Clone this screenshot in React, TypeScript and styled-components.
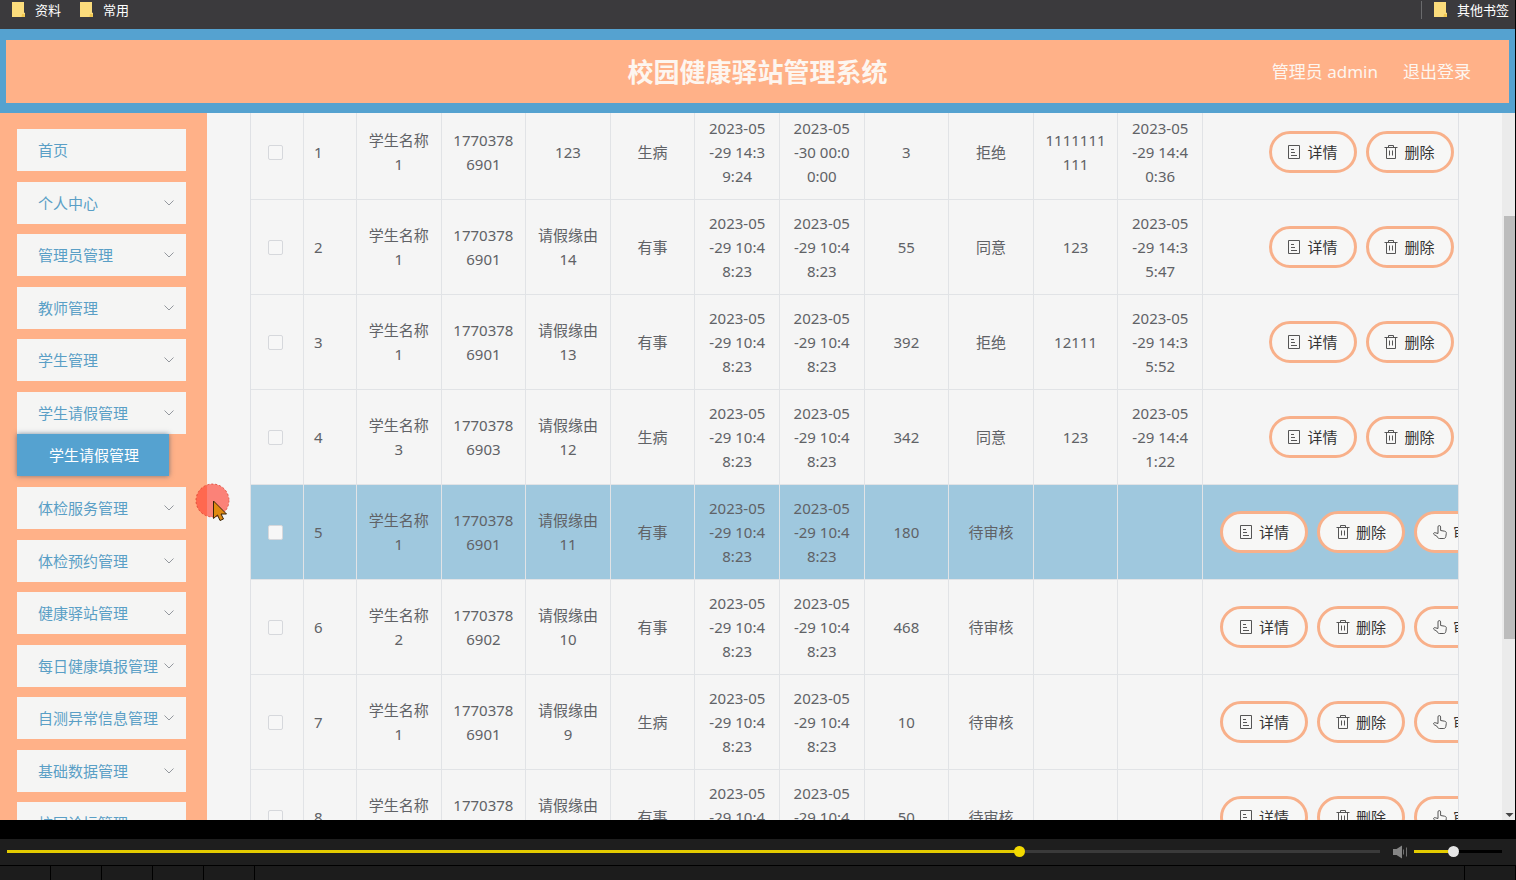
import React, { useState } from "react";
import styled, { createGlobalStyle } from "styled-components";

const GlobalStyle = createGlobalStyle`
  *, *::before, *::after { box-sizing: border-box; }
  body {
    margin: 0;
    background: #000;
    font-family: "Noto Sans", "Noto Sans CJK SC", sans-serif;
    font-size: 15px;
    line-height: 24px;
    color: #606266;
  }
  button { font: inherit; cursor: pointer; }
`;

const Player = styled.div`
  position: relative;
  display: flex;
  flex-direction: column;
  height: 100vh;
  overflow: hidden;
`;

const Screen = styled.div`
  flex: 1;
  min-height: 0;
  display: flex;
  flex-direction: column;
  border-right: 1px solid #000;
`;

/* Bookmarks bar */

const BookmarksBar = styled.nav`
  display: flex;
  align-items: center;
  gap: 19px;
  height: 29px;
  padding: 0 6px 10px 12px;
  background: #3b3a3d;
  flex-shrink: 0;
`;

const Bookmark = styled.a<{ $last?: boolean }>`
  display: flex;
  align-items: center;
  gap: 10px;
  margin-left: ${(p) => (p.$last ? "auto" : "0")};
  padding-left: ${(p) => (p.$last ? "12px" : "0")};
  border-left: ${(p) => (p.$last ? "1px solid #6a6a6c" : "0")};
  color: #fff;
  font-size: 13px;
  line-height: 18px;
  text-decoration: none;
`;

/* Site header */

const Header = styled.header`
  flex-shrink: 0;
  display: grid;
  grid-template-columns: 1fr auto 1fr;
  align-items: center;
  height: 84px;
  padding: 0 38px;
  background: #ffb188;
  border: solid #55a2d0;
  border-width: 11px 6px 10px;
  color: #fdf6f0;
`;

const Title = styled.h1`
  grid-column: 2;
  margin: 0;
  font-size: 26px;
  line-height: 36px;
  font-weight: 700;
`;

const Account = styled.div`
  display: flex;
  justify-content: flex-end;
  gap: 25px;
  font-size: 17px;
`;

const LogoutLink = styled.a`
  color: inherit;
  text-decoration: none;
`;

const Body = styled.div`
  flex: 1;
  min-height: 0;
  display: flex;
  overflow: hidden;
`;

/* Sidebar */

const Sidebar = styled.nav`
  flex: 0 0 207px;
  padding: 16px 21px 0 17px;
  background: #ffb188;
  overflow: hidden;
`;

const Menu = styled.ul`
  list-style: none;
  margin: 0;
  padding: 0;
`;

const MenuEntry = styled.li`
  margin-bottom: 10px;
  &:nth-child(odd) { margin-bottom: 11px; }
`;

const MenuButton = styled.button`
  display: flex;
  align-items: center;
  justify-content: space-between;
  width: 100%;
  height: 42px;
  padding: 0 12px 0 21px;
  border: 0;
  background: #f5f5f4;
  color: #5a9fc6;
  white-space: nowrap;
`;

const SubMenu = styled.div`
  padding: 0 17px 1px 0;
`;

const SubMenuLink = styled.a`
  display: block;
  padding: 9px 0 9px 32px;
  background: #55a2d0;
  box-shadow: 0 0 5px rgba(40, 70, 100, 0.6);
  color: #fff;
  text-decoration: none;
`;

/* Table */

const Main = styled.main`
  flex: 1;
  min-width: 0;
  padding: 0 43px;
  background: #f5f5f5;
  overflow: hidden;
`;

const TableFrame = styled.div`
  margin-top: -8px;
  border: solid #dfe1e5;
  border-width: 0 1px;
  overflow: hidden;
`;

const Table = styled.table`
  width: calc(100% + 62px);
  table-layout: fixed;
  border-collapse: separate;
  border-spacing: 0;
`;

const Col = styled.col<{ $w?: number }>`
  width: ${(p) => (p.$w ? `${p.$w}px` : "auto")};
`;

const Row = styled.tr<{ $active: boolean }>`
  background: ${(p) => (p.$active ? "#9fc8de" : "transparent")};
`;

const Cell = styled.td<{ $align?: string; $pad?: number }>`
  height: 95px;
  padding: 0 ${(p) => p.$pad ?? 0}px;
  border: solid #e1e3e6;
  border-width: 0 1px 1px 0;
  text-align: ${(p) => p.$align ?? "center"};
  vertical-align: middle;
  white-space: pre;
`;

const Check = styled.input`
  appearance: none;
  display: block;
  width: 15px;
  height: 15px;
  margin: 0;
  border: 1px solid #d6d8dc;
  border-radius: 2px;
  background: #f7f7f7;
  &:checked { background: #55a2d0; }
`;

const Actions = styled.div`
  display: flex;
  justify-content: center;
  gap: 9px;
`;

const ActionButton = styled.button`
  display: flex;
  align-items: center;
  justify-content: center;
  gap: 6px;
  flex: 0 0 88px;
  height: 42px;
  padding: 0;
  border: 3px solid #f8b08a;
  border-radius: 21px;
  background: #f7f7f6;
  color: #333;
`;

/* Page scrollbar */

const ScrollTrack = styled.div`
  flex: 0 0 13px;
  display: flex;
  flex-direction: column;
  align-items: center;
  justify-content: space-between;
  padding: 103px 0 0 2px;
  background: #ebebeb;
`;

const ScrollThumb = styled.div`
  width: 100%;
  height: 70%;
  background: #bcbcbc;
`;

/* Video controls */

const Controls = styled.div`
  flex-shrink: 0;
  display: flex;
  align-items: center;
  height: 27px;
  margin-top: 19px;
  padding: 0 14px 1px 7px;
  background: #1e1e1e;
  border-bottom: 1px solid #000;
`;

const Slider = styled.input<{ $rest: string; $thumb: string }>`
  appearance: none;
  height: 11px;
  margin: 0;
  background: linear-gradient(
      to right,
      #e3cb00 var(--fill),
      ${(p) => p.$rest} var(--fill)
    )
    center / 100% 3px no-repeat;
  &::-webkit-slider-thumb {
    appearance: none;
    width: 11px;
    height: 11px;
    border-radius: 50%;
    background: ${(p) => p.$thumb};
  }
`;

const SeekSlider = styled(Slider)`
  flex: 1;
  min-width: 0;
`;

const VolumeSlider = styled(Slider)`
  width: 88px;
`;

const MuteButton = styled.button`
  display: flex;
  margin: 0 6px 0 13px;
  padding: 0;
  border: 0;
  background: none;
`;

const ButtonStrip = styled.div`
  flex-shrink: 0;
  display: flex;
  height: 14px;
  background: #1c1c1c;
`;

const StripButton = styled.button<{ $end?: boolean }>`
  width: ${(p) => (p.$end ? "52px" : "51px")};
  padding: 0;
  margin-left: ${(p) => (p.$end ? "auto" : "0")};
  border: solid #000;
  border-width: ${(p) => (p.$end ? "0 1px" : "0 1px 0 0")};
  background: none;
`;

const Pointer = styled.svg`
  position: absolute;
  left: 195px;
  top: 483px;
  pointer-events: none;
`;

/* Icons */

const FolderIcon = () => (
  <svg width="13" height="15" viewBox="0 0 13 15" aria-hidden="true">
    <path d="M0 0h12v10.500l1 .5v4H0z" fill="#fbdc7c" />
    <path d="M9.500 15l.5-3h2.500l.5 3z" fill="#f0c64e" />
  </svg>
);

const ChevronIcon = () => (
  <svg width="10" height="6" viewBox="0 0 10 6" fill="none" stroke="#94989e" aria-hidden="true">
    <path d="M.5.5L5 5 9.500.5" />
  </svg>
);

const DetailIcon = () => (
  <svg width="14" height="14" viewBox="0 0 14 14" fill="none" stroke="#555" aria-hidden="true">
    <path d="M1.500.5h11v13h-11zM4 4.500h3M4 7.500h4M4 10.500h6" />
  </svg>
);

const DeleteIcon = () => (
  <svg width="14" height="14" viewBox="0 0 14 14" fill="none" stroke="#555" aria-hidden="true">
    <path d="M.5 2.500h13M4.500 2.500v-2h5v2M2.500 2.500v11h9v-11M5.500 5.500v5M8.500 5.500v5" />
  </svg>
);

const ThumbIcon = () => (
  <svg width="14" height="14" viewBox="0 0 14 14" fill="none" stroke="#555" strokeLinejoin="round" aria-hidden="true">
    <path d="M5 8.500V1.900a1.300 1.300 0 0 1 2.600 0v3.600l4 .7c1.200.2 1.900.9 1.700 2.200l-.5 3.200c-.2 1.200-.9 1.900-2 1.900H6.500c-.9 0-1.600-.4-2-1.200L3.700 11 1.200 9.700C.3 9.200.4 8 1.300 7.700c.5-.2 1-.1 1.500.2z" />
  </svg>
);

const SpeakerIcon = () => (
  <svg width="15" height="14" viewBox="0 0 15 14" aria-hidden="true">
    <path d="M0 4h3.500L9 .5v13L3.500 10H0z" fill="#858585" />
    <path d="M10.500 4.500v5M13.500 2.500v9" stroke="#707070" fill="none" />
  </svg>
);

/* Data */

const MENU = [
  "首页", "个人中心", "管理员管理", "教师管理", "学生管理", "学生请假管理", "体检服务管理",
  "体检预约管理", "健康驿站管理", "每日健康填报管理", "自测异常信息管理", "基础数据管理", "校园论坛管理",
];

const APPLIED = "2023-05\n-29 10:4\n8:23";

type Leave = { cells: string[]; pending: boolean };

const done = (...cells: string[]): Leave => ({ cells, pending: false });

const waiting = (student: string, phone: string, reason: string, kind: string, days: string): Leave => ({
  cells: [`学生名称\n${student}`, `1770378\n${phone}`, `请假缘由\n${reason}`, kind, APPLIED, APPLIED, days, "待审核", "", ""],
  pending: true,
});

const ROWS: Leave[] = [
  done("学生名称\n1", "1770378\n6901", "123", "生病", "2023-05\n-29 14:3\n9:24", "2023-05\n-30 00:0\n0:00", "3", "拒绝", "1111111\n111", "2023-05\n-29 14:4\n0:36"),
  done("学生名称\n1", "1770378\n6901", "请假缘由\n14", "有事", APPLIED, APPLIED, "55", "同意", "123", "2023-05\n-29 14:3\n5:47"),
  done("学生名称\n1", "1770378\n6901", "请假缘由\n13", "有事", APPLIED, APPLIED, "392", "拒绝", "12111", "2023-05\n-29 14:3\n5:52"),
  done("学生名称\n3", "1770378\n6903", "请假缘由\n12", "生病", APPLIED, APPLIED, "342", "同意", "123", "2023-05\n-29 14:4\n1:22"),
  waiting("1", "6901", "11", "有事", "180"),
  waiting("2", "6902", "10", "有事", "468"),
  waiting("1", "6901", "9", "生病", "10"),
  waiting("1", "6901", "8", "有事", "50"),
];

const ACTIVE_ROW = 4;

const fill = (value: number) => ({ "--fill": `${value / 10}%` }) as React.CSSProperties;

export default function App() {
  const [seek, setSeek] = useState(739);
  const [volume, setVolume] = useState(440);

  return (
    <Player>
      <GlobalStyle />
      <Screen>
        <BookmarksBar>
          <Bookmark href="#"><FolderIcon />资料</Bookmark>
          <Bookmark href="#"><FolderIcon />常用</Bookmark>
          <Bookmark href="#" $last><FolderIcon />其他书签</Bookmark>
        </BookmarksBar>

        <Header>
          <Title>校园健康驿站管理系统</Title>
          <Account>
            <span>管理员 admin</span>
            <LogoutLink href="#">退出登录</LogoutLink>
          </Account>
        </Header>

        <Body>
          <Sidebar>
            <Menu>
              {MENU.map((label, i) => (
                <MenuEntry key={label}>
                  <MenuButton type="button">
                    {label}
                    {i > 0 && <ChevronIcon />}
                  </MenuButton>
                  {label === "学生请假管理" && (
                    <SubMenu>
                      <SubMenuLink href="#">学生请假管理</SubMenuLink>
                    </SubMenu>
                  )}
                </MenuEntry>
              ))}
            </Menu>
          </Sidebar>

          <Main>
            <TableFrame>
              <Table>
                <colgroup>
                  <Col $w={53} />
                  <Col $w={53} />
                  {ROWS[0].cells.map((_, i) => <Col key={i} />)}
                  <Col $w={317} />
                </colgroup>
                <tbody>
                  {ROWS.map((row, r) => (
                    <Row key={r} $active={r === ACTIVE_ROW}>
                      <Cell $align="left" $pad={17}>
                        <Check type="checkbox" aria-label={`${r + 1}`} />
                      </Cell>
                      <Cell $align="left" $pad={10}>{r + 1}</Cell>
                      {row.cells.map((text, c) => <Cell key={c}>{text}</Cell>)}
                      <Cell>
                        <Actions>
                          <ActionButton type="button"><DetailIcon />详情</ActionButton>
                          <ActionButton type="button"><DeleteIcon />删除</ActionButton>
                          {row.pending && <ActionButton type="button"><ThumbIcon />审核</ActionButton>}
                        </Actions>
                      </Cell>
                    </Row>
                  ))}
                </tbody>
              </Table>
            </TableFrame>
          </Main>

          <ScrollTrack>
            <ScrollThumb />
            <svg width="9" height="8" viewBox="0 0 9 8" aria-hidden="true">
              <path d="M.5 1h8l-4 4z" fill="#444" />
            </svg>
          </ScrollTrack>
        </Body>
      </Screen>

      <Controls>
        <SeekSlider
          type="range" max={1000} aria-label="进度" $rest="#3a3a3a" $thumb="#f2d900"
          value={seek} onChange={(e) => setSeek(Number(e.target.value))} style={fill(seek)}
        />
        <MuteButton type="button" aria-label="静音"><SpeakerIcon /></MuteButton>
        <VolumeSlider
          type="range" max={1000} aria-label="音量" $rest="#000" $thumb="#e6e6e6"
          value={volume} onChange={(e) => setVolume(Number(e.target.value))} style={fill(volume)}
        />
      </Controls>
      <ButtonStrip>
        {[1, 2, 3, 4, 5].map((n) => <StripButton key={n} type="button" aria-label={`${n}`} />)}
        <StripButton type="button" aria-label="6" $end />
      </ButtonStrip>

      <Pointer width="36" height="40" viewBox="0 0 36 40" aria-hidden="true">
        <circle cx="17.500" cy="17.500" r="16.500" fill="#ff3c2c" fillOpacity=".62" stroke="#d8402c" strokeWidth=".8" strokeDasharray="2 2" />
        <path d="M18.500 18v17.500l4-3.500 2.500 5.500 3.500-1.500-2.500-5h5.500z" fill="#e08a10" stroke="#3a2408" />
      </Pointer>
    </Player>
  );
}
